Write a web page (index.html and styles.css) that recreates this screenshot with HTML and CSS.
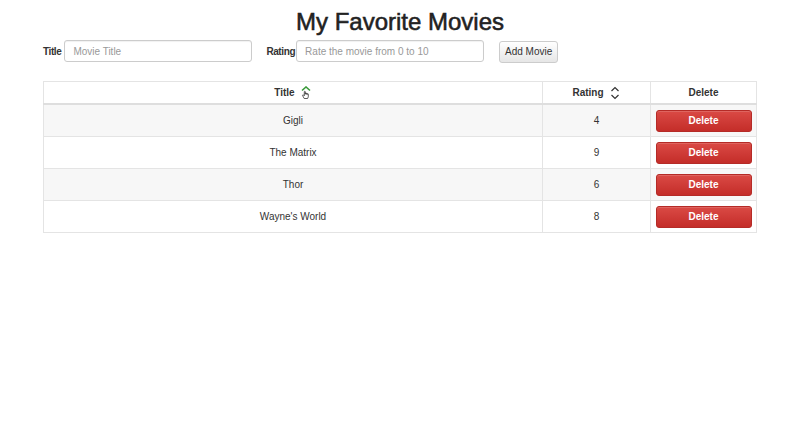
FILE: index.html
```html
<!DOCTYPE html>
<html>
<head>
<meta charset="utf-8">
<link rel="stylesheet" href="styles.css">
</head>
<body>
<div class="page">
  <h1 class="title">My Favorite Movies</h1>
  <form class="form">
    <label class="lbl">Title</label>
    <input class="inp inp-title" type="text" placeholder="Movie Title">
    <label class="lbl lbl-rating">Rating</label>
    <input class="inp inp-rating" type="text" placeholder="Rate the movie from 0 to 10">
    <button class="btn-add" type="button">Add Movie</button>
  </form>
  <table class="tbl">
    <thead>
      <tr>
        <th class="c-title"><span class="hd">Title
          <svg class="ico" width="12" height="14" viewBox="0 0 12 14">
            <path d="M2 4.5 L6 1 L10 4.5" fill="none" stroke="#3a9a3a" stroke-width="1.6"/>
            <path d="M4.2 12.5 L2.6 9.6 C2.3 9 3 8.5 3.5 9 L4.3 9.8 L4.3 5.8 C4.3 5.1 5.3 5.1 5.3 5.8 L5.3 8.2 L5.3 7.4 C5.3 6.8 6.3 6.8 6.3 7.4 L6.3 8.3 L6.3 7.7 C6.3 7.1 7.3 7.1 7.3 7.7 L7.3 8.5 L7.3 8.1 C7.3 7.6 8.3 7.6 8.3 8.1 L8.3 10.8 L7.6 12.5 Z" fill="#fff" stroke="#333" stroke-width="0.8"/>
          </svg></span></th>
        <th class="c-rating"><span class="hd">Rating
          <svg class="ico" width="12" height="14" viewBox="0 0 12 14">
            <path d="M2.5 5 L6 1.5 L9.5 5" fill="none" stroke="#333" stroke-width="1.2"/>
            <path d="M2.5 9 L6 12.5 L9.5 9" fill="none" stroke="#333" stroke-width="1.2"/>
          </svg></span></th>
        <th class="c-del">Delete</th>
      </tr>
    </thead>
    <tbody>
      <tr class="odd"><td>Gigli</td><td>4</td><td class="c-del"><button class="btn-del" type="button">Delete</button></td></tr>
      <tr><td>The Matrix</td><td>9</td><td class="c-del"><button class="btn-del" type="button">Delete</button></td></tr>
      <tr class="odd"><td>Thor</td><td>6</td><td class="c-del"><button class="btn-del" type="button">Delete</button></td></tr>
      <tr><td>Wayne's World</td><td>8</td><td class="c-del"><button class="btn-del" type="button">Delete</button></td></tr>
    </tbody>
  </table>
</div>
</body>
</html>
```
FILE: styles.css
```css
html, body {
  margin: 0;
  padding: 0;
  background: #fff;
}
body {
  font-family: "Liberation Sans", Arial, sans-serif;
  color: #333;
  font-size: 11px;
}
.page {
  padding: 0 43px 0 43px;
}
.title {
  margin: 0;
  padding-top: 9px;
  height: 31px;
  text-align: center;
  font-size: 24px;
  font-weight: normal;
  line-height: 26px;
  color: #222;
  -webkit-text-stroke: 0.55px #222;
}
.form {
  display: flex;
  align-items: center;
  height: 22px;
  margin: 0;
}
.lbl {
  font-weight: bold;
  font-size: 10px;
  letter-spacing: -0.4px;
  color: #333;
  margin-right: 3px;
}
.lbl-rating {
  margin-left: 14px;
  margin-right: 1px;
}
.inp {
  box-sizing: border-box;
  height: 22px;
  border: 1px solid #ccc;
  border-radius: 3px;
  padding: 0 8px;
  font-family: "Liberation Sans", Arial, sans-serif;
  font-size: 10px;
  color: #333;
  box-shadow: inset 0 1px 1px rgba(0,0,0,0.06);
}
.inp::placeholder {
  color: #999;
}
.inp-title { width: 188px; }
.inp-rating { width: 188px; }
.btn-add {
  box-sizing: border-box;
  margin-left: 15px;
  height: 22px;
  width: 59px;
  padding: 0;
  border: 1px solid #ccc;
  border-radius: 3px;
  background: linear-gradient(#fff, #e6e6e6);
  font-family: "Liberation Sans", Arial, sans-serif;
  font-size: 10px;
  color: #333;
  margin-top: 1px;
}
.tbl {
  margin-top: 19px;
  width: 714px;
  border-collapse: collapse;
  border: 1px solid #e4e4e4;
  table-layout: fixed;
}
.tbl th, .tbl td {
  border: 1px solid #e4e4e4;
  text-align: center;
  padding: 0;
  font-size: 10px;
}
.tbl th {
  height: 21px;
  font-weight: bold;
  border-bottom: 2px solid #dedede;
}
.tbl td {
  height: 31px;
}
.c-title { width: 498px; }
.c-rating { width: 107px; }
.hd {
  display: inline-flex;
  align-items: center;
  gap: 5px;
}
.ico { display: block; }
.odd td {
  background: #f7f7f7;
}
.btn-del {
  box-sizing: border-box;
  width: 96px;
  height: 22px;
  padding: 0;
  border: 1px solid #b52b27;
  border-radius: 3px;
  background: linear-gradient(#da4a45, #c42d29);
  color: #fff;
  font-family: "Liberation Sans", Arial, sans-serif;
  font-size: 10px;
  font-weight: bold;
  box-shadow: inset 0 1px 0 rgba(255,255,255,0.15);
  display: block;
  margin: 0 auto;
}
```
